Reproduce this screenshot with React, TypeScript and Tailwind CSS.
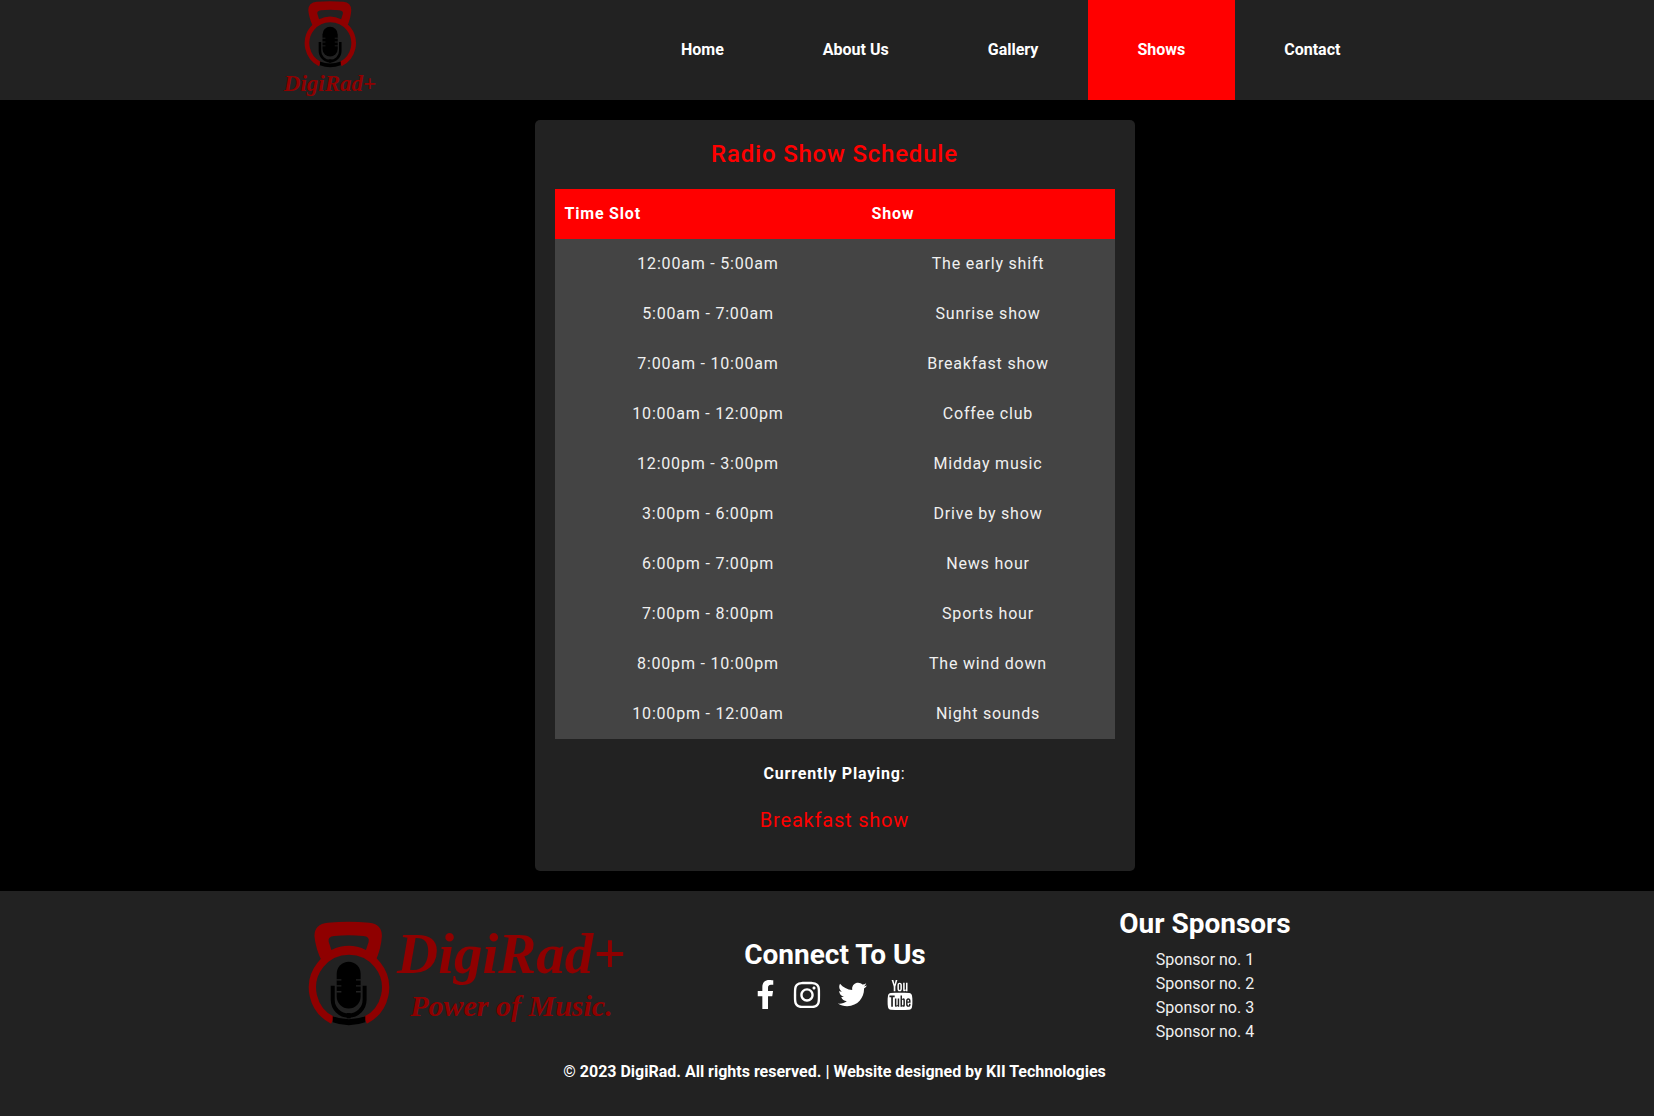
import { FaFacebookF, FaInstagram, FaTwitter } from "react-icons/fa"
import { TfiYoutube } from "react-icons/tfi"

const links = ["Home", "About Us", "Gallery", "Shows", "Contact"]

const schedule = [
  ["12:00am - 5:00am", "The early shift"],
  ["5:00am - 7:00am", "Sunrise show"],
  ["7:00am - 10:00am", "Breakfast show"],
  ["10:00am - 12:00pm", "Coffee club"],
  ["12:00pm - 3:00pm", "Midday music"],
  ["3:00pm - 6:00pm", "Drive by show"],
  ["6:00pm - 7:00pm", "News hour"],
  ["7:00pm - 8:00pm", "Sports hour"],
  ["8:00pm - 10:00pm", "The wind down"],
  ["10:00pm - 12:00am", "Night sounds"],
]

const sponsors = ["Sponsor no. 1", "Sponsor no. 2", "Sponsor no. 3", "Sponsor no. 4"]

function Kettlebell({ className }: { className: string }) {
  return (
    <svg viewBox="50 60 255 325" className={className}>
      {/* Handle and ring */}
      <path
        fill="#8f0000"
        fillRule="evenodd"
        d="M115 68Q178 62 240 68Q278 72 278 108Q276 145 258 186A110 110 0 0 0 98 186Q78 145 75 108Q75 72 115 68ZM135 108Q178 104 222 108Q242 110 238 126L230 150Q178 125 126 150L118 126Q114 110 135 108Z"
      />
      <path d="M130 362A110 110 0 1 1 228 362" fill="none" stroke="#8f0000" strokeWidth="22" />
      {/* Microphone */}
      <rect x="142" y="186" width="72" height="140" rx="36" fill="#000" />
      <path d="M130 258V300A48 48 0 0 0 226 300V258" fill="none" stroke="#000" strokeWidth="12" />
      <path d="M172 340H184V356H172Z" fill="#000" />
      <path d="M130 350Q178 368 228 350V368Q178 386 130 368Z" fill="#000" />
      <path d="M140 240H156M140 258H156M140 276H156M200 240H216M200 258H216M200 276H216" stroke="#222" strokeWidth="4" />
    </svg>
  )
}

export default function App() {
  return (
    <div className="w-full overflow-hidden bg-black">
      <div className="w-[1669px] text-white font-['Roboto',sans-serif]">
        {/* Header */}
        <header className="flex h-[100px] bg-[#222]">
          <div className="ml-[285px] flex w-[90px] flex-col items-center">
            <Kettlebell className="h-[69px] w-[54px] shrink-0" />
            <span className="mt-[1px] text-[23px] leading-[28px] font-bold italic whitespace-nowrap text-[#8f0000] font-['Liberation_Serif',serif]">
              DigiRad+
            </span>
          </div>
          <nav className="ml-[256.5px] flex">
            {links.map((link) => (
              <a
                key={link}
                className={`flex h-[100px] items-center px-[49.5px] text-base font-bold ${
                  link === "Shows" ? "bg-[#ff0000]" : ""
                }`}
              >
                {link}
              </a>
            ))}
          </nav>
        </header>

        {/* Schedule */}
        <main className="flex justify-center py-5">
          <section className="w-[600px] rounded-[5px] bg-[#222] p-5 tracking-[0.8px]">
            <h1 className="mb-[21px] text-center text-2xl leading-[28px] font-medium text-[#ff0000]">
              Radio Show Schedule
            </h1>
            <table className="w-[560px] border-collapse">
              <thead>
                <tr className="h-[50px] bg-[#ff0000]">
                  <th className="w-[307px] px-[10px] text-left font-bold">Time Slot</th>
                  <th className="px-[10px] text-left font-bold">Show</th>
                </tr>
              </thead>
              <tbody className="bg-[#444] text-[#f0f0f0]">
                {schedule.map(([time, show]) => (
                  <tr key={time} className="h-[50px]">
                    <td className="px-[10px] text-center">{time}</td>
                    <td className="px-[10px] text-center">{show}</td>
                  </tr>
                ))}
              </tbody>
            </table>
            <p className="mt-[25px] text-center leading-[20px]">
              <strong>Currently Playing</strong>:
            </p>
            <p className="mt-[25px] mb-[19px] text-center text-xl leading-[23px] text-[#ff0000]">Breakfast show</p>
          </section>
        </main>

        {/* Footer */}
        <footer className="h-[225px] bg-[#222] pt-[13px]">
          <div className="flex h-[143px] items-center">
            <div className="mb-[3px] ml-[306px] flex w-[321px] items-center">
              <Kettlebell className="h-[108px] w-[85px] shrink-0" />
              <div className="ml-[6px] flex flex-col items-center text-[#8f0000] font-['Liberation_Serif',serif] font-bold italic whitespace-nowrap">
                <span className="text-[57px] leading-[60px]">DigiRad+</span>
                <span className="mt-[4px] text-[30px] leading-[36px]">Power of Music.</span>
              </div>
            </div>
            <div className="ml-[113px] flex w-[190px] flex-col items-center pb-[4px]">
              <h3 className="text-[28px] leading-[33px] font-bold whitespace-nowrap">Connect To Us</h3>
              <div className="mt-[9px] flex items-center pr-[4px]">
                <FaFacebookF className="size-[29px]" />
                <FaInstagram className="ml-[12px] size-[30px]" />
                <FaTwitter className="ml-[16px] size-[29px]" />
                <TfiYoutube className="ml-[18px] size-[30px]" />
              </div>
            </div>
            <div className="ml-[180px] flex w-[190px] flex-col items-center">
              <h3 className="mb-[8px] text-[28px] leading-[33px] font-bold whitespace-nowrap">Our Sponsors</h3>
              {sponsors.map((sponsor) => (
                <span key={sponsor} className="text-base leading-6 text-[#f0f0f0]">
                  {sponsor}
                </span>
              ))}
            </div>
          </div>
          <p className="mt-[15px] text-center leading-[19px] font-bold">
            © 2023 DigiRad. All rights reserved. | Website designed by KII Technologies
          </p>
        </footer>
      </div>
    </div>
  )
}
